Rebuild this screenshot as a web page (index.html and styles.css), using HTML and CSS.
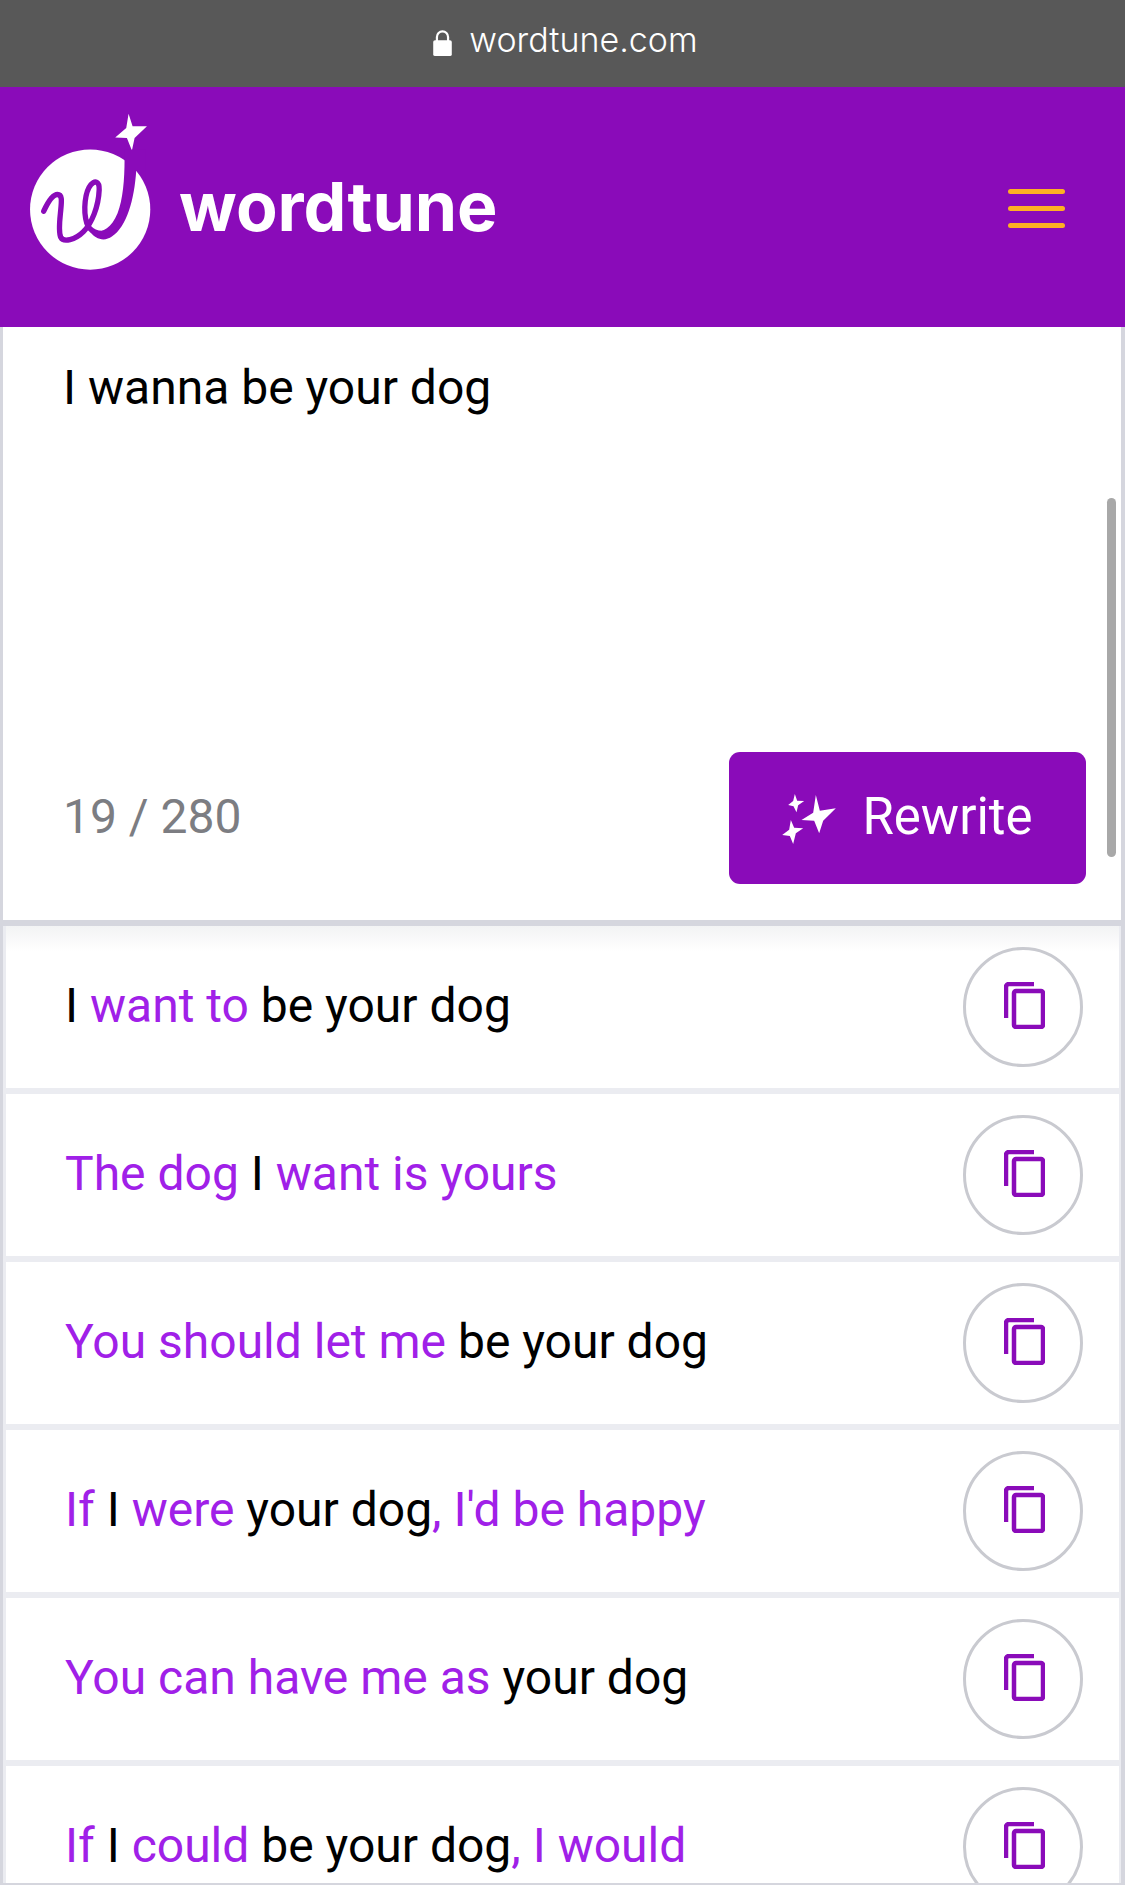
FILE: index.html
```html
<!DOCTYPE html>
<html lang="en">
<head>
<meta charset="utf-8">
<title>wordtune</title>
<link rel="stylesheet" href="styles.css">
</head>
<body>
<div class="browser-bar">
  <svg class="lock" viewBox="0 0 20 28"><path d="M0 13a2 2 0 0 1 2-2h16a2 2 0 0 1 2 2v13a2 2 0 0 1-2 2H2a2 2 0 0 1-2-2z" fill="#fff"/><path d="M4 12V7.500a6 6 0 0 1 12 0V12" fill="none" stroke="#fff" stroke-width="2.400"/></svg>
  <span class="url">wordtune.com</span>
</div>
<header class="site-header">
  <div class="brand">
    <svg class="logo" viewBox="0 40 380 470">
      <path fill="#fff" d="M295 42L307 80L350 80L313 115L305 152L290 115L255 113L288 85Z"/>
      <circle cx="180" cy="329" r="180" fill="#fff"/>
      <path fill="#8a0bb9" d="M283 178L283 150L345 150L345 240L318 212C312 300 290 380 245 410C225 425 195 420 180 395C205 400 240 395 262 340C278 300 283 240 283 178Z"/>
      <path fill="none" stroke="#8a0bb9" stroke-width="16" stroke-linecap="round" stroke-linejoin="round" d="M41 334C52 310 66 284 82 284C96 284 95 300 92 330C89 360 84 395 92 412C100 428 135 420 160 395C185 370 205 320 207 270C208 245 195 240 182 255C165 275 158 330 170 370C178 395 205 405 232 398"/>
    </svg>
    <span class="wordmark">wordtune</span>
  </div>
  <button class="menu" aria-label="Menu"><span></span><span></span><span></span></button>
</header>
<main class="frame">
  <section class="composer">
    <p class="input-text">I wanna be your dog</p>
    <div class="composer-foot">
      <span class="counter">19 / 280</span>
      <button class="rewrite">
        <svg class="sparkles" viewBox="67 42 161 150"><path fill="#fff" d="M168 45L180 92L228 85L190 122L178 160L163 122L125 120L160 98Z"/><path fill="#fff" d="M105 42L112 62L133 63L115 76L110 97L101 79L85 75L100 63Z"/><path fill="#fff" d="M93 120L103 143L130 145L108 160L100 192L90 168L67 165L88 149Z"/></svg>
        <span>Rewrite</span>
      </button>
    </div>
    <div class="scrollbar"></div>
  </section>
  <div class="divider"></div>
  <section class="results">
    <article class="row first"><p class="line">I <em>want to</em> be your dog</p><button class="copy" aria-label="Copy"><svg viewBox="0 0 41 47"><path d="M30 2H5a3 3 0 0 0-3 3v31"/><rect x="10" y="9" width="29" height="36" rx="2"/></svg></button></article>
    <article class="row"><p class="line"><em>The dog</em> I <em>want is yours</em></p><button class="copy" aria-label="Copy"><svg viewBox="0 0 41 47"><path d="M30 2H5a3 3 0 0 0-3 3v31"/><rect x="10" y="9" width="29" height="36" rx="2"/></svg></button></article>
    <article class="row"><p class="line"><em>You should let me</em> be your dog</p><button class="copy" aria-label="Copy"><svg viewBox="0 0 41 47"><path d="M30 2H5a3 3 0 0 0-3 3v31"/><rect x="10" y="9" width="29" height="36" rx="2"/></svg></button></article>
    <article class="row"><p class="line"><em>If</em> I <em>were</em> your dog<em>, I'd be happy</em></p><button class="copy" aria-label="Copy"><svg viewBox="0 0 41 47"><path d="M30 2H5a3 3 0 0 0-3 3v31"/><rect x="10" y="9" width="29" height="36" rx="2"/></svg></button></article>
    <article class="row"><p class="line"><em>You can have me as</em> your dog</p><button class="copy" aria-label="Copy"><svg viewBox="0 0 41 47"><path d="M30 2H5a3 3 0 0 0-3 3v31"/><rect x="10" y="9" width="29" height="36" rx="2"/></svg></button></article>
    <article class="row"><p class="line"><em>If</em> I <em>could</em> be your dog<em>, I would</em></p><button class="copy" aria-label="Copy"><svg viewBox="0 0 41 47"><path d="M30 2H5a3 3 0 0 0-3 3v31"/><rect x="10" y="9" width="29" height="36" rx="2"/></svg></button></article>
  </section>
</main>
</body>
</html>
```
FILE: styles.css
```css
* { box-sizing: border-box; }
html, body { margin: 0; padding: 0; }
body { width: 1125px; height: 1900px; overflow: hidden; background: #fff; font-family: Roboto, "Liberation Sans", sans-serif; color: #000; }
p { margin: 0; }
button { border: 0; padding: 0; background: none; font: inherit; }

.browser-bar { height: 87px; background: #585858; display: flex; align-items: center; justify-content: center; gap: 17px; padding: 0 0 7px 6px; }
.lock { width: 19px; height: 26px; margin-top: 6px; }
.url { color: #fff; font-family: Inter, sans-serif; font-size: 34px; font-weight: 300; line-height: 1; }

.site-header { height: 240px; background: #8a0bb9; display: flex; justify-content: space-between; padding: 26px 60px 0 30px; }
.brand { display: flex; align-items: flex-start; gap: 22px; }
.logo { width: 127px; height: 157px; }
.wordmark { font-family: Inter, sans-serif; font-weight: 700; font-size: 68px; line-height: 1; color: #fff; margin-top: 59px; }
.menu { width: 57px; height: 39px; margin-top: 76px; display: flex; flex-direction: column; justify-content: space-between; }
.menu span { display: block; height: 5px; background: #fdb022; border-radius: 3px; }

.frame { height: 1558px; border-left: 3px solid #d5d6de; border-right: 4px solid #d5d6de; border-bottom: 2px solid #d5d6de; overflow: hidden; }
.composer { position: relative; height: 593px; background: #fff; padding: 37px 35px 36px 60px; display: flex; flex-direction: column; justify-content: space-between; }
.input-text { font-size: 48px; line-height: 48px; }
.composer-foot { display: flex; align-items: center; justify-content: space-between; }
.counter { font-size: 48px; line-height: 1; color: #7c7d82; margin-top: -3px; }
.rewrite { width: 357px; height: 132px; background: #8a0bb9; border-radius: 11px; color: #fff; font-size: 51px; display: flex; align-items: center; justify-content: center; gap: 26px; padding-bottom: 3px; }
.sparkles { width: 54px; height: 50px; margin-top: 5px; }
.scrollbar { position: absolute; right: 5px; top: 171px; width: 9px; height: 359px; border-radius: 5px; background: #a8a8a8; }

.divider { height: 6px; background: #d5d6de; }
.results { background: #ebecf1; padding: 0 2px 0 3px; display: flex; flex-direction: column; gap: 6px; }
.row { flex: none; height: 162px; background: #fff; display: flex; align-items: center; justify-content: space-between; padding: 0 36px 0 59px; }
.row.first { background: linear-gradient(#f2f3f4, #fff 26px); }
.line { font-size: 48px; line-height: 1; margin-top: -2px; }
.line em { font-style: normal; color: #a020e8; }
.copy { flex: none; width: 120px; height: 120px; border: 3px solid #c9cad0; border-radius: 50%; background: #fff; display: flex; align-items: center; justify-content: center; }
.copy svg { width: 41px; height: 47px; fill: none; stroke: #8a0bb9; stroke-width: 4.500; margin-left: 3px; margin-top: -3px; }
```
